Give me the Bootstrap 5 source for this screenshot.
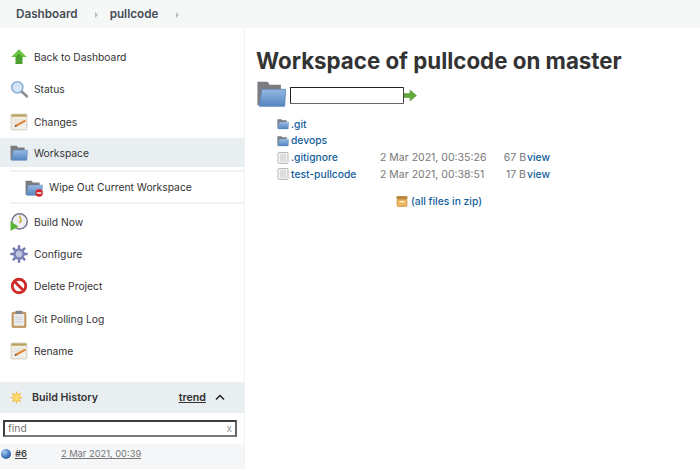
<!DOCTYPE html>
<html lang="en">
<head>
<meta charset="utf-8">
<title>Workspace of pullcode on master</title>
<link href="https://cdn.jsdelivr.net/npm/bootstrap@5.3.0/dist/css/bootstrap.min.css" rel="stylesheet">
<style>
html,body{height:470px;overflow:hidden}
body{font-family:Inter,"Liberation Sans",sans-serif;font-size:10.3px;color:#333;background:#fff}
.crumbs{height:28px;background:#f6f7f7;padding:2px 0 0 16px;font-size:11.7px;font-weight:600;color:#444d56}
.crumbs .sep{width:0;height:0;border-left:3px solid #b8bcbf;border-top:3px solid transparent;border-bottom:3px solid transparent}
.crumbs .s1{margin:0 12px 0 17px}
.crumbs .s2{margin-left:18px}
.shell{height:442px}
.side{width:245px;border-right:1px solid #f0f2f3;flex:none;padding-top:12.7px}
.task{height:32.4px;padding-left:10px;gap:6px;color:#333;text-decoration:none;line-height:1}
.task svg{width:18px;height:18px;flex:none}
.task.on{background:#e9eef1;height:29px;margin-top:.6px;margin-bottom:3px}
.subtask{height:34px;margin:0 0 1px 10px;padding:1px 0 0 15px;border-top:2px solid #eef2f4;border-bottom:2px solid #eef2f4;gap:6px;color:#333;text-decoration:none}
.subtask svg{width:18px;height:18px;flex:none}
.hist{margin-top:14.5px}
.hist-head{height:31px;background:#e9eef1;padding:1px 19px 0 10px;font-size:10.7px;font-weight:600}
.hist-head svg.sun{width:13px;height:13px;margin-right:9px}
.hist-head .trend{color:#333;margin-left:auto;margin-right:9px}
.find-wrap{height:31px;padding:7px 7px 0 3px}
.find{height:17px;border:2px solid #3d3d3d;border-right-color:#666;border-bottom-color:#777;padding:0 3px 0 3px;color:#777;font-size:10.3px;line-height:13px;background:#fff}
.find .x{color:#999;font-size:10px}
.row-hist{height:25px;background:#f5f6f7;padding:0 0 4px 1px;font-size:9.3px;color:#666}
.row-hist .ball{width:10px;height:10px;border-radius:50%;background:radial-gradient(circle at 35% 30%,#a9c8ee,#3f76bd 55%,#24497c);margin-right:4px}
.row-hist a{color:#444}
.row-hist .num{font-weight:600;margin-right:34px}
.row-hist .dt{color:#777}
.pane{padding:19px 0 0 11px;flex:1}
.pane h1{font-size:22.3px;font-weight:700;color:#333;margin:0 0 5px;line-height:28px}
.pathbar{height:29px}
.pathbar .big{width:33px;height:30px;flex:none;margin:-1px 2px 0 -1px}
.pathbox{width:114px;height:17px;border:1.5px solid #222;border-right-color:#444;border-bottom-color:#666;background:#fff;border-radius:1px;margin-top:1px}
.pathbar .go{width:13px;height:13px;margin-top:1px}
.files{margin:7px 0 0 21px;width:255px;color:#666}
.fline{height:16.7px}
.fline svg{width:12px;height:12px;flex:none;margin-right:2px}
.fline a{color:#14609c;font-weight:500;text-decoration:none}
.fline .nm{width:89px;flex:none}
.fline .when{width:110px;flex:none;color:#777;font-size:10.5px}
.fline .sz{width:36px;text-align:right;flex:none;color:#777;font-size:10.5px;margin-right:1px}
.zip{margin:10px 0 0 119px;height:17px}
.zip svg{width:12px;height:12px;margin-right:3px}
.zip a{color:#14609c;font-weight:500;text-decoration:none}
</style>
</head>
<body>
<svg width="0" height="0" class="d-block position-absolute">
<defs>
<linearGradient id="gf" x1="0" y1="0" x2="0" y2="1"><stop offset="0" stop-color="#95b9e4"/><stop offset="1" stop-color="#5585c0"/></linearGradient>
<symbol id="ifolder" viewBox="0 0 16 16"><path d="M.5 1.500h5.500l1 1.500h6v2.500H3L2 14H.5z" fill="#7a7c80"/><path d="M1.500 14.500 2.800 5.500H15.500L15 14.500z" fill="url(#gf)" stroke="#5e88b8" stroke-width=".5"/></symbol>
<symbol id="ipage" viewBox="0 0 12 12"><rect x="1" y=".5" width="10" height="11" rx=".8" fill="#f3f3f3" stroke="#b9b9b9"/><path d="M3 3h6M3 5h6M3 7h6M3 9h6" stroke="#bbb" stroke-width=".8"/></symbol>
<symbol id="inote" viewBox="0 0 16 16"><rect x="1" y="1" width="14" height="14" rx="1" fill="#f1efe8" stroke="#c5c1b4" stroke-width=".7"/><rect x="1.300" y="1.300" width="13.400" height="2" fill="#b9a25a"/><path d="M3 6h9M3 8h7M3 10h5" stroke="#d8d4c6" stroke-width=".6"/><path d="M4 12.500l1-2 8-4.500 1.500 1.300-8 4.500z" fill="#e0873a"/><path d="M4 12.500l1-2 1.300 1.200z" fill="#5b4a34"/></symbol>
</defs>
</svg>

<nav class="crumbs d-flex align-items-center">
<span>Dashboard</span><span class="sep s1"></span><span>pullcode</span><span class="sep s2"></span>
</nav>

<div class="shell d-flex">
<aside class="side d-flex flex-column">
<a class="task d-flex align-items-center" href="#"><svg viewBox="0 0 18 18"><path d="M9 1.500 16.500 9H12.500V16H5.500V9H1.500z" fill="#4aa02c"/><path d="M9 1.500 16.500 9H12.500L9 5.500 5.500 9H1.500z" fill="#6cc644"/></svg>Back to Dashboard</a>
<a class="task d-flex align-items-center" href="#"><svg viewBox="0 0 16 16"><circle cx="6.500" cy="6.500" r="5" fill="#d5e5f7" stroke="#8fb0d8" stroke-width="1.400"/><path d="M10.500 10.500 15 14.500" stroke="#8a8f96" stroke-width="2.400" stroke-linecap="round"/></svg>Status</a>
<a class="task d-flex align-items-center" href="#"><svg><use href="#inote"/></svg>Changes</a>
<a class="task on d-flex align-items-center" href="#"><svg><use href="#ifolder"/></svg>Workspace</a>
<a class="subtask d-flex align-items-center" href="#"><svg viewBox="0 0 16 16"><use href="#ifolder"/><circle cx="12.500" cy="12.500" r="3.300" fill="#d8232a"/><path d="M10.500 12.500h4" stroke="#fff" stroke-width="1.300"/></svg>Wipe Out Current Workspace</a>
<a class="task d-flex align-items-center" href="#"><svg viewBox="0 0 16 16"><circle cx="8.500" cy="7.500" r="6.800" fill="#eef0f3" stroke="#77758c" stroke-width="1.300"/><path d="M8.500 2.500 10 7 8 8.500" fill="none" stroke="#c9a936" stroke-width="1.300"/><path d="M.5 7.500 7.500 12 .5 16z" fill="#55b332"/></svg>Build Now</a>
<a class="task d-flex align-items-center" href="#"><svg viewBox="0 0 16 16"><path d="M8 .3v15.400M.3 8h15.400M2.600 2.600l10.800 10.800M13.400 2.600 2.600 13.400" stroke="#6f76ad" stroke-width="2.200"/><circle cx="8" cy="8" r="5.200" fill="#7d84b8"/><circle cx="8" cy="8" r="2.800" fill="#c3c6e0"/></svg>Configure</a>
<a class="task d-flex align-items-center" href="#"><svg viewBox="0 0 16 16"><circle cx="8" cy="8" r="6" fill="#fff" stroke="#cf2a2a" stroke-width="2.500"/><path d="M3.800 3.800 12.200 12.200" stroke="#cf2a2a" stroke-width="2.500"/></svg>Delete Project</a>
<a class="task d-flex align-items-center" href="#"><svg viewBox="0 0 16 16"><rect x="1.800" y="2" width="12.400" height="13.500" rx=".8" fill="#c99a5b" stroke="#a87b40" stroke-width=".5"/><rect x="3.300" y="3.500" width="9.400" height="10.500" fill="#e9ebee"/><rect x="5" y=".6" width="6" height="3" rx=".6" fill="#83878c"/><path d="M5 6.500h6M5 8.500h6M5 10.500h6" stroke="#c8cbd0" stroke-width=".7"/></svg>Git Polling Log</a>
<a class="task d-flex align-items-center" href="#"><svg><use href="#inote"/></svg>Rename</a>

<section class="hist">
<div class="hist-head d-flex align-items-center">
<svg class="sun" viewBox="0 0 14 14"><g stroke="#f0b93a" stroke-width="1.300"><path d="M7 .5v13M.5 7h13M2.400 2.400l9.200 9.200M11.600 2.400l-9.200 9.200"/></g><circle cx="7" cy="7" r="4" fill="#fbd96b" stroke="#eeb33a" stroke-width=".6"/></svg>
<span>Build History</span>
<a class="trend" href="#">trend</a>
<svg width="10" height="7" viewBox="0 0 10 7"><path d="M1 5.500 5 1.500 9 5.500" fill="none" stroke="#222" stroke-width="1.500"/></svg>
</div>
<div class="find-wrap"><div class="find d-flex justify-content-between align-items-center"><span>find</span><span class="x">x</span></div></div>
<div class="row-hist d-flex align-items-center"><span class="ball"></span><a class="num" href="#">#6</a><a class="dt" href="#">2 Mar 2021, 00:39</a></div>
</section>
</aside>

<main class="pane">
<h1>Workspace of pullcode on master</h1>
<div class="pathbar d-flex align-items-center">
<svg class="big"><use href="#ifolder"/></svg>
<div class="pathbox"></div>
<svg class="go" viewBox="0 0 13 13"><path d="M0 4.500h6V1l6.500 5.500L6 12V8.500H0z" fill="#62a83a" stroke="#4f8f2c" stroke-width=".5"/></svg>
</div>
<div class="files">
<div class="fline d-flex align-items-center"><svg><use href="#ifolder"/></svg><a class="nm" href="#">.git</a></div>
<div class="fline d-flex align-items-center"><svg><use href="#ifolder"/></svg><a class="nm" href="#">devops</a></div>
<div class="fline d-flex align-items-center"><svg><use href="#ipage"/></svg><a class="nm" href="#">.gitignore</a><span class="when">2 Mar 2021, 00:35:26</span><span class="sz">67 B</span><a href="#">view</a></div>
<div class="fline d-flex align-items-center"><svg><use href="#ipage"/></svg><a class="nm" href="#">test-pullcode</a><span class="when">2 Mar 2021, 00:38:51</span><span class="sz">17 B</span><a href="#">view</a></div>
<div class="zip d-flex align-items-center"><svg viewBox="0 0 12 12"><rect x=".5" y="1" width="11" height="3.500" rx="1" fill="#b98a3e"/><rect x="1" y="4.500" width="10" height="7" rx="1" fill="#eeb65e" stroke="#b98a3e" stroke-width=".6"/><rect x="3.500" y="6" width="5" height="1.400" fill="#fff3d0"/></svg><a href="#">(all files in zip)</a></div>
</div>
</main>
</div>
<script src="https://cdn.jsdelivr.net/npm/bootstrap@5.3.0/dist/js/bootstrap.bundle.min.js"></script>
</body>
</html>
